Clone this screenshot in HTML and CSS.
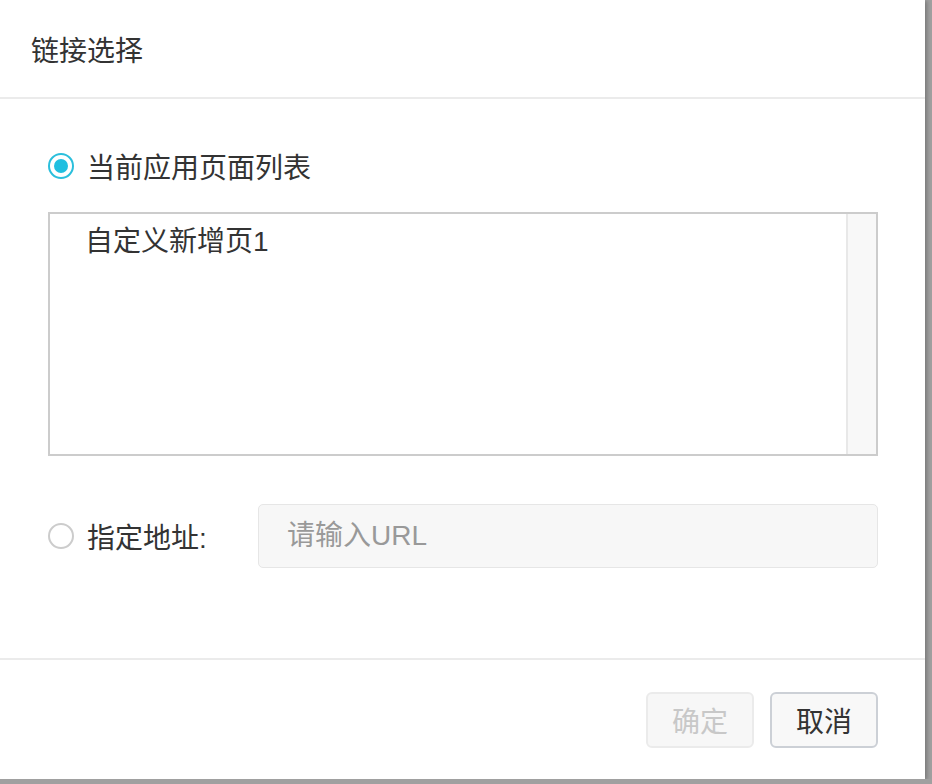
FILE: index.html
```html
<!DOCTYPE html>
<html lang="zh-CN">
<head>
    <meta charset="UTF-8">
    <title>链接选择</title>
    <link rel="stylesheet" href="styles.css">
</head>
<body>
    <div class="dialog">
        <div class="dialog-header">链接选择</div>
        <div class="dialog-body">
            <label class="radio-row">
                <span class="radio checked"></span>
                <span class="radio-label">当前应用页面列表</span>
            </label>
            <div class="page-list">
                <div class="page-items">
                    <div class="page-item">自定义新增页1</div>
                </div>
                <div class="scroll-track"></div>
            </div>
            <div class="url-row">
                <label class="radio-row">
                    <span class="radio"></span>
                    <span class="radio-label">指定地址:</span>
                </label>
                <input class="url-input" type="text" placeholder="请输入URL" disabled>
            </div>
        </div>
        <div class="dialog-footer">
            <button class="btn" disabled>确定</button>
            <button class="btn btn-cancel">取消</button>
        </div>
    </div>
</body>
</html>
```

FILE: styles.css
```css
body {
    margin: 0;
    background-color: #a0a0a0;
    font-family: "Liberation Sans", "Noto Sans CJK SC", sans-serif;
    color: #333;
}
.dialog {
    width: 925px;
    height: 779px;
    background-color: #fff;
    box-shadow: 2px 1px 4px rgba(0, 0, 0, 0.25);
    display: flex;
    flex-direction: column;
}
.dialog-header {
    height: 97px;
    padding-left: 31px;
    display: flex;
    align-items: center;
    font-size: 28px;
    border-bottom: 2px solid #ebebeb;
}
.dialog-body {
    flex: 1;
    padding: 51px 47px 0 48px;
}
.radio-row {
    display: flex;
    align-items: center;
    height: 32px;
}
.radio {
    width: 26px;
    height: 26px;
    box-sizing: border-box;
    border: 2px solid #ccc;
    border-radius: 50%;
    display: flex;
    align-items: center;
    justify-content: center;
}
.radio.checked {
    border-color: #2bbfdc;
}
.radio.checked::after {
    content: "";
    width: 14px;
    height: 14px;
    border-radius: 50%;
    background-color: #21bfe0;
}
.radio-label {
    margin-left: 13px;
    font-size: 28px;
}
.page-list {
    margin-top: 30px;
    height: 244px;
    box-sizing: border-box;
    border: 2px solid #ccc;
    display: flex;
}
.page-items {
    flex: 1;
}
.page-item {
    padding: 5px 0 0 35px;
    font-size: 28px;
}
.scroll-track {
    width: 28px;
    background-color: #f8f8f8;
    border-left: 2px solid #e8e8e8;
}
.url-row {
    margin-top: 48px;
    display: flex;
    align-items: center;
    justify-content: space-between;
}
.url-input {
    width: 620px;
    height: 64px;
    box-sizing: border-box;
    padding: 0 28px;
    border: 1px solid #e6e6e6;
    border-radius: 5px;
    background-color: #f7f7f7;
    font-family: inherit;
    font-size: 28px;
}
.url-input::placeholder {
    color: #999;
}
.dialog-footer {
    height: 121px;
    box-sizing: border-box;
    border-top: 2px solid #ebebeb;
    padding: 32px 47px 0 0;
    display: flex;
    justify-content: flex-end;
    align-items: flex-start;
    gap: 16px;
}
.btn {
    width: 108px;
    height: 56px;
    border: 2px solid #ccd0d6;
    border-radius: 6px;
    background-color: #f8f8f8;
    color: #333;
    font-family: inherit;
    font-size: 28px;
    cursor: pointer;
}
.btn:disabled {
    border-color: #ebebeb;
    background-color: #f7f7f7;
    color: #c8c8c8;
    cursor: default;
}
```
